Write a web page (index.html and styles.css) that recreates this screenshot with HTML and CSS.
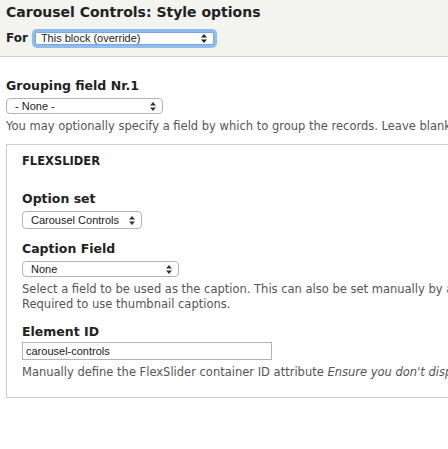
FILE: index.html
```html
<!DOCTYPE html>
<html>
<head>
<meta charset="utf-8">
<link rel="stylesheet" href="styles.css">
</head>
<body>
<div class="page">
  <div class="header">
    <h1 class="title">Carousel Controls: Style options</h1>
    <div class="for-row">
      <span class="for-label">For</span>
      <div class="select select-focus select-for"><span>This block (override)</span><svg class="arr" width="6" height="9" viewBox="0 0 6 9"><path d="M0 3.5 L3 0 L6 3.5 Z M0 5.5 L3 9 L6 5.5 Z" fill="#222"/></svg></div>
    </div>
  </div>
  <div class="content">
    <div class="item item-group">
      <div class="label">Grouping field Nr.1</div>
      <div class="select select-group"><span>- None -</span><svg class="arr" width="6" height="9" viewBox="0 0 6 9"><path d="M0 3.5 L3 0 L6 3.5 Z M0 5.5 L3 9 L6 5.5 Z" fill="#333"/></svg></div>
      <div class="desc">You may optionally specify a field by which to group the records. Leave blank to not group.</div>
    </div>
    <div class="fieldset">
      <div class="legend">FLEXSLIDER</div>
      <div class="item">
        <div class="label">Option set</div>
        <div class="select select-opt"><span>Carousel Controls</span><svg class="arr" width="6" height="9" viewBox="0 0 6 9"><path d="M0 3.5 L3 0 L6 3.5 Z M0 5.5 L3 9 L6 5.5 Z" fill="#333"/></svg></div>
      </div>
      <div class="item">
        <div class="label">Caption Field</div>
        <div class="select select-cap"><span>None</span><svg class="arr" width="6" height="9" viewBox="0 0 6 9"><path d="M0 3.5 L3 0 L6 3.5 Z M0 5.5 L3 9 L6 5.5 Z" fill="#333"/></svg></div>
        <div class="desc">Select a field to be used as the caption. This can also be set manually by adding a caption.<br>Required to use thumbnail captions.</div>
      </div>
      <div class="item">
        <div class="label">Element ID</div>
        <div class="input">carousel-controls</div>
        <div class="desc">Manually define the FlexSlider container ID attribute <em>Ensure you don't display similar ID elements on the same page.</em></div>
      </div>
    </div>
  </div>
</div>
</body>
</html>
```

FILE: styles.css
```css
html, body {
  margin: 0;
  padding: 0;
  background: #ffffff;
  overflow: hidden;
}
.page {
  width: 448px;
  overflow: hidden;
  font-family: "DejaVu Sans", Verdana, sans-serif;
  color: #222;
}
.header {
  background: #f3f3ef;
  border-bottom: 1px solid #cccccc;
  padding: 2px 6px 0;
  height: 54px;
}
.title {
  margin: 0;
  font-size: 14px;
  font-weight: bold;
  line-height: 20px;
  color: #222;
  white-space: nowrap;
}
.for-row {
  display: flex;
  align-items: center;
  margin-top: 9px;
  gap: 7px;
}
.for-label {
  font-weight: bold;
  font-size: 12px;
}
.select {
  display: flex;
  align-items: center;
  justify-content: space-between;
  box-sizing: border-box;
  background: #fff;
  border: 1px solid #b4b4b4;
  border-radius: 4px;
  font-family: "Liberation Sans", Arial, sans-serif;
  font-size: 11px;
  color: #222;
  padding: 0 6px 0 8px;
  white-space: nowrap;
}
.select-focus {
  border: 1px solid #7aa7d8;
  border-radius: 2px;
  box-shadow: 0 0 0 3px #8ebcf0;
}
.select-for {
  width: 179px;
  height: 13px;
  padding-left: 5px;
}
.select-group {
  width: 157px;
  height: 16px;
  margin-top: 4px;
}
.select-opt {
  width: 120px;
  height: 18px;
  margin-top: 4px;
}
.select-cap {
  width: 157px;
  height: 16px;
  margin-top: 4px;
}
.content {
  padding: 0 6px;
  width: 700px;
}
.item-group {
  margin-top: 21px;
}
.label {
  font-weight: bold;
  font-size: 12.5px;
  line-height: 16px;
  color: #222;
  white-space: nowrap;
}
.desc {
  font-size: 11.5px;
  line-height: 15px;
  color: #555;
  margin-top: 5px;
  white-space: nowrap;
}
.fieldset {
  border: 1px solid #cccccc;
  margin-top: 10px;
  padding: 8px 15px 25px;
  height: 219px;
}
.legend {
  font-weight: bold;
  font-size: 11.5px;
  line-height: 16px;
  color: #222;
}
.fieldset .item {
  margin-top: 22px;
}
.fieldset .item + .item {
  margin-top: 12px;
}
.input {
  box-sizing: border-box;
  width: 250px;
  height: 18px;
  margin-top: 2px;
  border: 1px solid #b4b4b4;
  font-family: "Liberation Sans", Arial, sans-serif;
  font-size: 11px;
  line-height: 16px;
  padding-left: 3px;
  color: #222;
}
em {
  font-style: italic;
}
```
